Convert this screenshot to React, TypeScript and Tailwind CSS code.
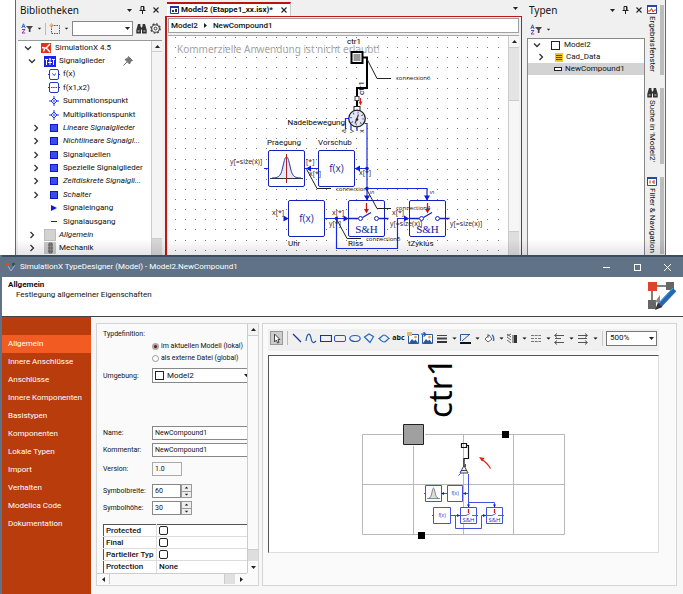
import type { ReactNode } from "react";
import { clsx } from "clsx";

type TreeNode = {
  label: string;
  level: 0 | 1 | 2;
  icon: ReactNode;
  chevron?: "open" | "closed";
  italic?: boolean;
  pinned?: boolean;
};

const indent = { 0: "pl-[2px]", 1: "pl-[6px]", 2: "pl-[10px]" };

function Chevron({ open }: { open: boolean }) {
  return (
    <svg viewBox="0 0 8 8" className="h-2 w-2" fill="none" stroke="#333" strokeWidth="1.3">
      <path d={open ? "M1 2.5 4 5.5 7 2.5" : "M2.5 1 5.5 4 2.5 7"} />
    </svg>
  );
}

function Caret({ className = "" }: { className?: string }) {
  return (
    <svg viewBox="0 0 5 3" className={clsx("h-[3px] w-[5px] shrink-0", className)} fill="#222">
      <path d="M0 0h5L2.5 3z" />
    </svg>
  );
}

function BlueSquare() {
  return <span className="block h-2 w-2 border border-[#0a18c8] bg-[#3c4bf0]" />;
}

function FunctionIcon({ dots }: { dots?: boolean }) {
  return (
    <svg viewBox="0 0 12 11" className="h-[11px] w-3" fill="none" stroke="#2538c8">
      <rect x="1.5" y=".5" width="9" height="10" rx="1.5" />
      <path d={dots ? "M3 5.5h1.5M5.2 5.5h1.5M7.5 5.5h1.5" : "M4.5 4.5 6 6.5M7.5 4.5 6.5 6.5"} />
      <path d="M0 5.5h1.5M10.5 5.5H12" />
    </svg>
  );
}

function DiamondIcon() {
  return (
    <svg viewBox="0 0 12 10" className="h-[10px] w-3" fill="#dfe4ff" stroke="#2538e8">
      <path d="M6 2 9 5 6 8 3 5z" />
      <path d="M1 5h2M9 5h2M6 0v2M6 8v2M5 5h2" />
    </svg>
  );
}

const library: TreeNode[] = [
  {
    label: "SimulationX 4.5",
    level: 0,
    chevron: "open",
    icon: (
      <svg viewBox="0 0 10 10" className="h-[10px] w-[10px]">
        <path d="M0 0h10v10H0z" fill="#e6301a" />
        <path d="M1 4.5 4 5 2.5 8.5M9 1 5.2 5 9 9" fill="none" stroke="#fff" strokeWidth="1.4" />
      </svg>
    ),
  },
  {
    label: "Signalglieder",
    level: 1,
    chevron: "open",
    pinned: true,
    icon: (
      <svg viewBox="0 0 12 11" className="h-[11px] w-3" fill="none" stroke="#fff">
        <path d="M0 0h12v11H0z" fill="#1a20f0" stroke="none" />
        <path d="M1 3.5h3M8 3.5h3M2.5 3.5V9M9.5 3.5V9M4 6.5h4M6 2v7M4.8 3.2h2.4" />
      </svg>
    ),
  },
  { label: "f(x)", level: 2, icon: <FunctionIcon /> },
  { label: "f(x1,x2)", level: 2, icon: <FunctionIcon dots /> },
  { label: "Summationspunkt", level: 2, icon: <DiamondIcon /> },
  { label: "Multiplikationspunkt", level: 2, icon: <DiamondIcon /> },
  { label: "Lineare Signalglieder", level: 2, chevron: "closed", italic: true, icon: <BlueSquare /> },
  { label: "Nichtlineare Signalgl...", level: 2, chevron: "closed", italic: true, icon: <BlueSquare /> },
  { label: "Signalquellen", level: 2, chevron: "closed", icon: <BlueSquare /> },
  { label: "Spezielle Signalglieder", level: 2, chevron: "closed", icon: <BlueSquare /> },
  { label: "Zeitdiskrete Signalgli...", level: 2, chevron: "closed", italic: true, icon: <BlueSquare /> },
  { label: "Schalter", level: 2, chevron: "closed", italic: true, icon: <BlueSquare /> },
  {
    label: "Signaleingang",
    level: 2,
    icon: (
      <svg viewBox="0 0 6 6" className="h-[6px] w-[6px]">
        <path d="M0 0 6 3 0 6z" fill="#0a18e8" />
      </svg>
    ),
  },
  { label: "Signalausgang", level: 2, icon: <span className="block h-px w-[6px] bg-[#0a18e8]" /> },
  {
    label: "Allgemein",
    level: 1,
    chevron: "closed",
    italic: true,
    icon: <span className="block h-3 w-3 border border-[#bdbdbd] bg-[#d2d2d2]" />,
  },
  {
    label: "Mechanik",
    level: 1,
    chevron: "closed",
    icon: (
      <svg viewBox="0 0 12 12" className="h-3 w-3">
        <path d="M0 0h12v12H0z" fill="#c9c9c9" />
        <path d="M5 1h3v10H5zM4 3h5M4 6h5M4 9h5" fill="#999" stroke="#555" strokeWidth=".8" />
      </svg>
    ),
  },
];

const pages = [
  "Allgemein",
  "Innere Anschlüsse",
  "Anschlüsse",
  "Innere Komponenten",
  "Basistypen",
  "Komponenten",
  "Lokale Typen",
  "Import",
  "Verhalten",
  "Modelica Code",
  "Dokumentation",
];

function PinIcon() {
  return (
    <svg viewBox="0 0 7 8" className="h-2 w-[7px]" fill="none" stroke="#222">
      <path d="M2 .5h3v4H2zM.5 4.5h6M3.5 5v3M4.5 1v3" />
    </svg>
  );
}

function CloseIcon() {
  return (
    <svg viewBox="0 0 6 6" className="h-[6px] w-[6px]" stroke="#222" strokeWidth="1.1">
      <path d="M.5.5 5.5 5.5M5.5.5.5 5.5" />
    </svg>
  );
}

function PanelHeader({ title }: { title: string }) {
  return (
    <div className="flex h-5 items-center pr-[3px] pl-[2px]">
      <h2 className="flex-1 font-['Noto_Sans',sans-serif] text-[10px] leading-[14px]">{title}</h2>
      <div className="flex items-center gap-[7px]">
        <button aria-label="Menü"><Caret /></button>
        <button aria-label="Anheften"><PinIcon /></button>
        <button aria-label="Schließen"><CloseIcon /></button>
      </div>
    </div>
  );
}

function SortFilter() {
  return (
    <button aria-label="Sortieren und filtern" className="flex items-center gap-1">
      <svg viewBox="0 0 12 11" className="h-[11px] w-3" fill="none">
        <path d="M.8 5 2.5.8 4.2 5M1.4 3.6h2.2" stroke="#2c5fb8" />
        <path d="M1 6.5h3L1 10h3.2" stroke="#8a3aa8" />
        <path d="M5 3h7L9.5 6v3H7.8V6z" fill="#444" />
      </svg>
      <Caret className="scale-75" />
    </button>
  );
}

function BinocularsIcon() {
  return (
    <svg viewBox="0 0 11 10" className="h-[10px] w-[11px]" fill="#333">
      <path d="M2 0h2.4v2L5 3v6.5H.3V6zM6.6 0H9l1.7 6v3.5H6V3l.6-1z" />
      <path d="M4.5 3.5h2v2h-2z" />
      <path d="M1.6 7h2M7.4 7h2" stroke="#ddd" />
    </svg>
  );
}

function LibraryPanel() {
  return (
    <section className="flex w-[146px] shrink-0 flex-col pl-[2px]">
      <PanelHeader title="Bibliotheken" />
      <div className="flex h-5 items-center justify-between pr-px pb-[3px] pl-[3px]">
        <SortFilter />
        <span className="h-3 w-px bg-[#bbb]" />
        <button aria-label="Neu" className="flex items-center gap-1">
          <svg viewBox="0 0 11 11" className="h-[11px] w-[11px]" fill="none">
            <path d="M2.5 2.5h8v8h-8z" stroke="#555" strokeDasharray="1.5 1" />
            <path d="M2.5 0v5M0 2.5h5M1 1l3 3M4 1 1 4" stroke="#e6a860" strokeWidth=".7" />
          </svg>
          <Caret className="scale-75" />
        </button>
        <div className="relative">
          <select aria-label="Suche" className="block h-[15px] w-[61px] appearance-none border border-[#888] bg-white" />
          <Caret className="pointer-events-none absolute top-[6px] right-[3px]" />
        </div>
        <button aria-label="Suchen"><BinocularsIcon /></button>
        <button aria-label="Optionen">
          <svg viewBox="0 0 12 12" className="h-[11px] w-[11px]" fill="none" stroke="#333">
            <circle cx="6" cy="6" r="4.2" strokeWidth="1.1" />
            <circle cx="6" cy="6" r="1.5" />
            <circle cx="6" cy="6" r="5.2" strokeWidth="1.2" strokeDasharray="2 2.1" />
          </svg>
        </button>
      </div>
      <div className="flex h-[215px] border-t border-[#999] bg-white">
        <ul className="flex min-w-0 flex-1 flex-col">
          {library.map((node) => (
            <li
              key={node.label}
              className={clsx("flex flex-1 items-center whitespace-nowrap", indent[node.level], node.italic && "italic")}
            >
              <span className="mr-1 flex w-4 justify-center">
                {node.chevron && <Chevron open={node.chevron === "open"} />}
              </span>
              <span className="mr-[3px] flex w-3 justify-center">{node.icon}</span>
              {node.label}
              {node.pinned && (
                <svg viewBox="0 0 10 10" className="mr-[18px] ml-auto h-[10px] w-[10px]" fill="#777" stroke="#777">
                  <path d="M5.5.5 9.5 4.5 8 5 6.5 8 2 3.5 5 2z" />
                  <path d="M4 6 .5 9.5" />
                </svg>
              )}
            </li>
          ))}
        </ul>
        <div className="flex w-[11px] flex-col border-l border-[#ccc] bg-[#d8d8d8]">
          <div className="flex h-[11px] items-center justify-center border-b border-[#ccc] bg-[#f4f4f4]">
            <Caret className="rotate-180" />
          </div>
          <div className="mb-4 flex-1 border-b border-[#ccc] bg-[#f4f4f4]" />
        </div>
      </div>
    </section>
  );
}

const dotColumns = Array.from({ length: 33 }, (_, i) => Math.round(175 + i * 10.08));
const dotRows = Array.from({ length: 22 }, (_, i) => Math.round(37 + i * 10.13));

function SwitchBlock({ x }: { x: number }) {
  return (
    <g transform={`translate(${x} 200)`} fill="none" stroke="#1420c0">
      <rect x=".5" y=".5" width="36" height="36" rx="1.5" fill="#fff" fillOpacity=".6" />
      <path d="M0 18.5h10M14.5 17.5 23 12.5M31 18.5h9.5" strokeWidth="1.3" />
      <circle cx="12.5" cy="18.5" r="2" fill="#fff" />
      <circle cx="28.5" cy="18.5" r="2" fill="#fff" />
      <path d="M18.5 3v7" stroke="#c01818" strokeWidth="1.3" />
      <path d="M16 9h5l-2.5 4.5z" fill="#c01818" stroke="none" />
      <text x="18.5" y="33" textAnchor="middle" fill="#1420a0" stroke="none" className="font-['Liberation_Serif',serif] text-[11px]">
        S&amp;H
      </text>
    </g>
  );
}

function ModelDiagram() {
  return (
    <svg className="h-full w-full bg-white" role="img" aria-label="Modell">
      <g transform="translate(-168 -36)">
        <g fill="#777">
          {dotRows.map((y) => dotColumns.map((x) => <rect key={`${x}-${y}`} x={x} y={y} width="1" height="1" />))}
        </g>
        <text x="177" y="53" fill="#a5a5a5" className="font-['Noto_Sans',sans-serif] text-[10px]">
          Kommerzielle Anwendung ist nicht erlaubt!
        </text>

        {/* controller and pointer gauge */}
        <rect x="351.5" y="52" width="11" height="11" fill="#fff" stroke="#000" strokeWidth="2" />
        <rect x="353.5" y="54" width="7" height="7" fill="#999" />
        <path d="M363 57.5h4v30.5h-10v8M357 101v6" fill="none" stroke="#000" strokeWidth="2" />
        <rect x="355" y="96.5" width="4" height="4" fill="#fff" stroke="#444" />
        <path d="M360.5 98v5" stroke="#d82010" />
        <path d="M358.5 101.5h4l-2 4z" fill="#d82010" />
        <rect x="354" y="106.5" width="6" height="4" fill="#fff" stroke="#222" />
        <circle cx="357" cy="118.5" r="8.3" fill="#dfe8fa" stroke="#222" strokeWidth="1.3" />
        <circle cx="357" cy="118.5" r="6" fill="none" stroke="#667" strokeWidth="2" strokeDasharray="1 3.7" />
        <path d="M355 123.5 358.5 114.5" stroke="#a02020" strokeWidth="1.3" />
        <circle cx="357" cy="119.5" r="1.3" fill="#222" />
        <text x="354" y="44" textAnchor="middle">ctr1</text>
        <text transform="translate(364 95) rotate(-90)">ctr1</text>
        <text x="345" y="125" textAnchor="end">Nadelbewegung</text>

        {/* signal wiring */}
        <g fill="none" stroke="#1a28e0" strokeWidth="1.2">
          <path d="M349 118.5h-3.5v11M351 124v6M357 127v4M364.5 123.5h2.5V200M367 188.5h60V200" />
          <path d="M367 168.5h-12M318 168.5h-13M264 168.5h5M284 218.5h5M325 218.5h23" />
          <path d="M336.5 218.5v30h61v-30h11" />
        </g>
        <g fill="#1018e0">
          <path d="M355 168.5l5-3v6zM306 168.5l5-3v6zM288.5 218.5l-5-3v6zM348.5 218.5l-5-3v6zM409 218.5l-5-3v6z" />
          <path d="M367 200.5l-3-5h6zM427 200.5l-3-5h6z" />
          <circle cx="367" cy="168.5" r="1.8" />
          <circle cx="367" cy="188.5" r="1.8" />
          <circle cx="336.5" cy="218.5" r="1.8" />
        </g>

        <g fill="#fff" stroke="#1420b8">
          <rect x="268.5" y="150.5" width="36" height="36" rx="1.5" />
          <rect x="318.5" y="150.5" width="36" height="36" rx="1.5" />
          <rect x="288.5" y="200.5" width="36" height="36" rx="1.5" />
        </g>
        <path d="M270 178.5h33" stroke="#333" />
        <path d="M272 178c8 0 9-3 11-12 1.5-6 2-9 3.5-9s2 3 3.5 9c2 9 3 12 11 12" fill="#e8ebf6" stroke="#2038b0" />
        <path d="M286.5 154v29" stroke="#b02020" />
        <g fill="#1a28a8" className="font-['Open_Sans',sans-serif] text-[10px]" textAnchor="middle">
          <text x="336.5" y="172">f(x)</text>
          <text x="306.5" y="222">f(x)</text>
        </g>
        <SwitchBlock x={348} />
        <SwitchBlock x={409} />

        {/* leader lines */}
        <path
          d="M367 59 377 78.5h14M307 170 317 188.5h14M367 190 377 208.5h14M337 220 347 238.5h14"
          fill="none"
          stroke="#222"
        />
        <g className="font-['Open_Sans',sans-serif] text-[6px]" fill="#111">
          <text x="396" y="80">connection6</text>
          <text x="336" y="191">connection</text>
          <text x="396" y="210">connection4</text>
          <text x="366" y="241">connection5</text>
        </g>

        <g fill="#111">
          <text x="267" y="145">Praegung</text>
          <text x="318" y="145">Vorschub</text>
          <text x="288" y="246">Uhr</text>
          <text x="348" y="246">Riss</text>
          <text x="408" y="246">tZyklus</text>
        </g>
        <g fill="#302018" className="font-['Open_Sans',sans-serif] text-[7px]">
          <text x="230" y="164">y[=size(x)]</text>
          <text x="306" y="164">[*]</text>
          <text x="309" y="176">x[*]</text>
          <text x="359" y="175">x[*]</text>
          <text x="272" y="215">x[*]</text>
          <text x="332" y="215">x[*]</text>
          <text x="329" y="226">y[*]</text>
          <text x="392" y="215">x[*]</text>
          <text x="390" y="226">y[=size(x)]</text>
          <text x="450" y="226">y[=size(x)]</text>
          <text transform="translate(346 133) rotate(-90)">a</text>
          <text transform="translate(354 133) rotate(-90)">v</text>
          <text transform="translate(364 133) rotate(-90)">x</text>
          <text transform="translate(374 194) rotate(-90)">s</text>
          <text transform="translate(434 194) rotate(-90)">s</text>
        </g>
      </g>
    </svg>
  );
}

function ModelWindow() {
  return (
    <main className="flex min-w-0 flex-1 flex-col pl-[3px]">
      <div className="flex h-4 items-start justify-between pt-[2px] pr-1">
        <div className="ml-[2px] flex h-[14px] items-center border-t-2 border-r border-[#c01010] border-r-[#ccc] bg-white px-[3px]">
          <svg viewBox="0 0 9 8" className="mr-[2px] h-2 w-[9px]">
            <path d="M.5.5h8v7h-8z" fill="#fff" stroke="#1838a0" />
            <path d="M0 0h9v2H0z" fill="#1838a0" />
            <path d="M2 4h2v2H2zM5 3h2v3H5z" fill="#333" />
          </svg>
          <span className="font-bold whitespace-nowrap">Model2 (Etappe1_xx.isx)*</span>
          <button aria-label="Tab schließen" className="ml-2"><CloseIcon /></button>
        </div>
        <button aria-label="Fensterliste" className="mt-[5px]"><Caret /></button>
      </div>
      <div className="flex flex-1 flex-col border-t border-r border-l-2 border-[#c01818] bg-[#f0f0f0] pl-px">
        <nav className="mt-px mr-[2px] flex h-[15px] items-center gap-[5px] border border-[#a0a0a0] bg-white px-[2px] font-medium">
          <a href="#model2">Model2</a>
          <Caret className="-rotate-90" />
          <a href="#newcompound1">NewCompound1</a>
        </nav>
        <div className="mt-[2px] mr-[2px] flex flex-1 border-t border-[#aaa]">
          <div className="h-[219px] min-w-0 flex-1"><ModelDiagram /></div>
          <div className="flex w-[11px] flex-col border-l border-[#ccc] bg-[#f6f6f6]">
            <div className="flex h-[11px] items-center justify-center"><Caret className="rotate-180" /></div>
            <div className="h-[54px] border-y border-[#ccc] bg-[#e4e4e4]" />
            <div className="flex-1" />
            <div className="h-6 border-t border-[#ccc] bg-[#dedede]" />
          </div>
        </div>
      </div>
    </main>
  );
}

function TypesPanel() {
  return (
    <section className="ml-[5px] flex w-[118px] shrink-0 flex-col">
      <PanelHeader title="Typen" />
      <div className="flex h-[18px] items-center pl-[3px]"><SortFilter /></div>
      <ul className="flex-1 border border-b-0 border-[#888] bg-white">
        <li className="flex h-3 items-center pl-[5px]">
          <Chevron open />
          <span className="mr-1 ml-[10px] h-[9px] w-[9px] border border-[#222]" />
          Model2
        </li>
        <li className="flex h-3 items-center pl-[9px]">
          <Chevron open={false} />
          <svg viewBox="0 0 8 9" className="mr-[3px] ml-[10px] h-[9px] w-2">
            <path d="M0 0h8v9H0z" fill="#f2c428" />
            <path d="M1 2.5h6M1 4.5h6M1 6.5h6" stroke="#334a90" strokeWidth="1.2" />
          </svg>
          Cad_Data
        </li>
        <li className="flex h-3 items-center bg-[#d3d3d3] pl-[26px]">
          <span className="mr-[3px] h-1 w-2 border border-[#222] bg-white" />
          NewCompound1
        </li>
      </ul>
    </section>
  );
}

function SideTab({ label, icon, className }: { label: string; icon: ReactNode; className: string }) {
  return (
    <button className={clsx("flex w-[19px] flex-col items-center gap-[2px] overflow-hidden border-r-4 border-[#bcbcbc] pr-px", className)}>
      <span className="shrink-0">{icon}</span>
      <span className="leading-3 whitespace-nowrap [writing-mode:vertical-rl]">{label}</span>
    </button>
  );
}

function ChartIcon({ d }: { d: string }) {
  return (
    <svg viewBox="0 0 10 9" className="h-[9px] w-[10px]" fill="none">
      <path d="M.5.5h9v8h-9z" fill="#fff" stroke="#2848a0" />
      <path d="M0 0h10v2H0z" fill="#2848a0" />
      <path d={d} stroke="#c83020" />
    </svg>
  );
}

function SideTabs() {
  return (
    <aside className="flex w-[20px] shrink-0 flex-col gap-[13px] overflow-hidden pt-[5px]">
      <SideTab label="Ergebnisfenster" className="h-[70px]" icon={<ChartIcon d="M1 6h2l1.5-2.5L6 7l1.5-2H9" />} />
      <SideTab label="Suche in 'Model2'" className="h-[76px]" icon={<BinocularsIcon />} />
      <SideTab label="Filter & Navigation" className="h-[77px]" icon={<ChartIcon d="M3 3.5v3M5 5h2M7 3v4" />} />
    </aside>
  );
}

const tools: { name: string; icon: ReactNode; menu?: boolean }[] = [
  { name: "Linie", icon: <path d="M2 2 10 10" stroke="#1a3890" strokeWidth="1.2" /> },
  { name: "Kurve", icon: <path d="M1 9c1-8 4-9 5-3s3 5 5 3" stroke="#2058b0" strokeWidth="1.2" /> },
  { name: "Rechteck", icon: <path d="M.5 3.5h11v6H.5z" stroke="#183498" strokeWidth="1.2" /> },
  { name: "Abgerundetes Rechteck", icon: <rect x=".5" y="3.5" width="11" height="6" rx="1.5" stroke="#2858b0" /> },
  { name: "Ellipse", icon: <ellipse cx="6" cy="6.5" rx="5.2" ry="3" stroke="#2858b0" strokeWidth="1.2" /> },
  { name: "Polygon", icon: <path d="M1.5 5 6 2l4.5 2.5-3.5 6z" stroke="#2868c0" strokeWidth="1.2" /> },
  { name: "Geschlossene Kurve", icon: <path d="M6 3c2 0 3 2 5 3.5-2 1-3 3.5-5 3.5S3 8 1 6.5C3 6 4 3 6 3z" stroke="#2868c0" strokeWidth="1.2" /> },
  { name: "Text", icon: null },
  {
    name: "Bild",
    icon: (
      <>
        <path d="M1.5 2.5h10v9h-10z" fill="#fff" stroke="#2858a0" />
        <path d="M2 11 5 7l2 2 1.5-1.5L11 11z" fill="#2858a0" />
        <path d="M0 0h5v4H0z" fill="#e8b870" />
        <circle cx="8.5" cy="5" r="1.3" fill="#e8a030" />
      </>
    ),
  },
  {
    name: "Bild verknüpfen",
    icon: (
      <>
        <path d="M1.5 2.5h10v9h-10z" fill="#fff" stroke="#2858a0" />
        <path d="M2 11 5 7l2 2 1.5-1.5L11 11z" fill="#2858a0" />
        <path d="M0 2h4M2.5 0 5 2.5 2.5 4.5" stroke="#2060c0" strokeWidth="1.2" />
        <circle cx="8.5" cy="5" r="1.3" fill="#e8a030" />
      </>
    ),
  },
  {
    name: "Linienstärke",
    menu: true,
    icon: (
      <>
        <path d="M1 3.5h10" stroke="#444" />
        <path d="M1 6.5h10" stroke="#444" strokeWidth="2" />
        <path d="M1 10h10" stroke="#333" strokeWidth="2" />
      </>
    ),
  },
  {
    name: "Linienfarbe",
    menu: true,
    icon: (
      <>
        <path d="M1 11h11" stroke="#111" strokeWidth="2" />
        <path d="M1.5 9V2.5H11M3 9l8-7" stroke="#2858a0" />
      </>
    ),
  },
  {
    name: "Füllfarbe",
    menu: true,
    icon: (
      <>
        <path d="M2 7 6 3l3 4-4 3-3-3zM5 2v4" fill="#fff" stroke="#666" />
        <path d="M9 3c2 1 2 3 1.5 6" stroke="#2878c8" strokeWidth="1.5" />
      </>
    ),
  },
  {
    name: "Füllmuster",
    menu: true,
    icon: (
      <>
        <path d="M1 2 5 5M1 5l4 3M1 8l4 3M5 2 1 4" stroke="#666" />
        <path d="M6 3h2v8H6z" fill="#999" />
        <path d="M8 3h3v8H8z" fill="#333" />
      </>
    ),
  },
  { name: "Linienart", menu: true, icon: <path d="M1 3.5h10M1 6.5h3M5 6.5h2M8 6.5h3M1 9.5h10" stroke="#777" strokeDasharray="3 .7" /> },
  { name: "Linienanfang", menu: true, icon: <path d="M2 3.5h9M2 6.5h6M2 10.5h9M4 1.5l-2.5 2L4 5.5M4 8.5l-2.5 2 2.5 2" stroke="#555" /> },
  { name: "Linienende", menu: true, icon: <path d="M1 3.5h9M1 6.5h9M1 10.5h9M8 1.5l2.5 2L8 5.5M8 8.5l2.5 2-2.5 2" stroke="#555" /> },
];

function DrawToolbar() {
  return (
    <div className="flex h-[22px] items-center bg-[#f0f0f0] px-[2px] pb-1">
      <button aria-label="Auswählen" className="flex h-[14px] w-[13px] items-center justify-center border border-[#999] bg-[#ccc]">
        <svg viewBox="0 0 8 11" className="h-[11px] w-2" fill="#fff" stroke="#444">
          <path d="M1.5 1v8l2-2 1 3 1.5-.5-1-3h2z" />
        </svg>
      </button>
      <span className="mr-[2px] ml-1 h-[14px] w-px bg-[#bbb]" />
      <div className="flex flex-1 items-center justify-between pr-[4px] pl-px">
        {tools.map((tool) => (
          <button key={tool.name} aria-label={tool.name} className="flex items-center gap-1">
            {tool.icon ? (
              <svg viewBox="0 0 12 13" className="h-[13px] w-3" fill="none">{tool.icon}</svg>
            ) : (
              <span className="font-['Open_Sans',sans-serif] text-[7px] leading-3 font-bold">abc</span>
            )}
            {tool.menu && <Caret className="scale-90" />}
          </button>
        ))}
      </div>
      <div className="relative border-l border-[#ccc] pl-[3px]">
        <select aria-label="Zoom" className="block h-[15px] w-[51px] appearance-none border border-[#777] bg-white pl-[3px] leading-3">
          <option>500%</option>
        </select>
        <Caret className="pointer-events-none absolute top-[6px] right-[3px]" />
      </div>
    </div>
  );
}

function SymbolDrawing() {
  return (
    <svg className="block h-full w-full font-['Open_Sans',sans-serif]" role="img" aria-label="Symbol">
      <g transform="translate(-269 -356)" fill="none">
        <path d="M362.5 434.5h202v100h-202zM362.5 484.5h202M413.5 434.5v100M463.5 434.5v100M513.5 434.5v100" stroke="#b8b8b8" />
        <text transform="translate(452 418) rotate(-90)" fill="#000" className="font-['Noto_Sans',sans-serif] text-[33px]">ctr1</text>
        <path d="M402 423h23v23h-23z" fill="#fff" />
        <path d="M403.5 424.5h20v20h-20z" fill="#a0a0a0" stroke="#222" />
        <path d="M502 431h7v7h-7zM418 532h7v7h-7z" fill="#000" />
        <path d="M490.5 468.5c-3-5-5-7-9-9" stroke="#e02010" strokeWidth="1.3" />
        <path d="M479 457l5.5 1-2.5 3.5z" fill="#e02010" />

        <path d="M461.5 443.5h5v4h-5zM466.5 445.5h2v13h-4.5v8" stroke="#111" strokeWidth="1.2" />
        <path d="M464 465.5l-4 7.5h8zM461 470.5h6" fill="#eee" stroke="#333" strokeWidth=".9" />
        <path d="M465.5 464v3" stroke="#d02010" />
        <g stroke="#4450e0">
          <path d="M460.5 471v2.5l-2 2M468.5 474v33.5M468.5 502.5h26v5M468.5 493.5h-6M447 493.5h-6M424 493.5h2M432 515.5h2M450 515.5h10M455.5 515.5v13h26v-13h5M476 515.5h2M502 515.5h2" />
          <path d="M425.5 485.5h16v16h-16zM447.5 485.5h15v16h-15zM433.5 507.5h17v16h-17zM460.5 507.5h16v16h-16zM486.5 507.5h16v16h-16z" fill="#fff" />
          <path d="M461 515.5h5l4-2M472 515.5h4M487 515.5h5l4-2M498 515.5h4" strokeWidth=".9" />
        </g>
        <path d="M427 498.5h13M429 498c3 0 3-10 4.5-10s1.5 10 4.5 10" fill="#ddd" stroke="#667" strokeWidth=".8" />
        <path d="M468.5 509v4M494.5 509v4" stroke="#d02010" strokeWidth="1.3" />
        <g fill="#2030c8" textAnchor="middle" className="text-[5px]">
          <text x="455" y="495">f(x)</text>
          <text x="442" y="517">f(x)</text>
          <text x="468.5" y="522" className="text-[6px]">S&amp;H</text>
          <text x="494.5" y="522" className="text-[6px]">S&amp;H</text>
        </g>
        <path
          d="M466 492v3l-3-1.5zM444 492v3l-3-1.5zM457 514v3l3-1.5zM483 514v3l3-1.5zM467 504.5h3l-1.5 3zM493 504.5h3l-1.5 3z"
          fill="#1018e0"
        />
      </g>
    </svg>
  );
}

const flags = ["Protected", "Final", "Partieller Typ"];
const labelClass = "w-[49px] shrink-0 whitespace-nowrap";
const inputClass = "border border-[#888] bg-white px-[2px] leading-3";

function Spinner({ id, label, value }: { id: string; label: string; value: string }) {
  return (
    <div className="flex h-[14px] items-center">
      <label htmlFor={id} className={labelClass}>{label}</label>
      <input id={id} defaultValue={value} className={clsx(inputClass, "h-[14px] w-[29px]")} />
      <div className="flex h-[14px] w-[11px] flex-col border border-[#999]">
        <button type="button" aria-label={`${label} erhöhen`} className="flex flex-1 items-center justify-center border-b border-[#999] bg-[#eee]">
          <Caret className="rotate-180 scale-75" />
        </button>
        <button type="button" aria-label={`${label} verringern`} className="flex flex-1 items-center justify-center bg-[#eee]">
          <Caret className="scale-75" />
        </button>
      </div>
    </div>
  );
}

function GeneralForm() {
  return (
    <form className="w-[163px] shrink-0 border border-[#d4d4d4] bg-[#fafafa] text-[7px] leading-3">
      <div className="flex h-[249px]">
        <div className="flex min-w-0 flex-1 flex-col overflow-hidden pt-1 pl-[6px]">
          <fieldset>
            <legend>Typdefinition:</legend>
            <label className="ml-[49px] flex h-3 items-center gap-[2px] whitespace-nowrap">
              <input
                type="radio"
                name="scope"
                defaultChecked
                className="h-[7px] w-[7px] shrink-0 appearance-none rounded-full border border-[#888] bg-white checked:border-2 checked:border-[#aaa] checked:bg-[#701010]"
              />
              im aktuellen Modell (lokal)
            </label>
            <label className="ml-[49px] flex h-3 items-center gap-[2px] whitespace-nowrap">
              <input type="radio" name="scope" className="h-[7px] w-[7px] shrink-0 appearance-none rounded-full border border-[#999] bg-white" />
              als externe Datei (global)
            </label>
          </fieldset>
          <div className="mt-1 flex h-[15px] items-center">
            <label htmlFor="environment" className={labelClass}>Umgebung:</label>
            <div className="relative flex-1">
              <select id="environment" className="block h-[15px] w-full appearance-none border border-r-0 border-[#888] bg-white pl-[14px] text-[8px] leading-3">
                <option>Model2</option>
              </select>
              <span className="pointer-events-none absolute top-[3px] left-[3px] h-[9px] w-[9px] border border-[#222]" />
              <Caret className="pointer-events-none absolute top-[6px] -right-[2px]" />
            </div>
          </div>
          <div className="mt-[43px] flex h-[14px] items-center">
            <label htmlFor="name" className={labelClass}>Name:</label>
            <input id="name" defaultValue="NewCompound1" className={clsx(inputClass, "h-[14px] min-w-0 flex-1 border-r-0")} />
          </div>
          <div className="mt-[3px] flex h-[14px] items-center">
            <label htmlFor="comment" className={labelClass}>Kommentar:</label>
            <input id="comment" defaultValue="NewCompound1" className={clsx(inputClass, "h-[14px] min-w-0 flex-1 border-r-0")} />
          </div>
          <div className="mt-[5px] mb-2 flex h-[14px] items-center">
            <label htmlFor="version" className={labelClass}>Version:</label>
            <input id="version" defaultValue="1.0" className="h-[14px] w-[30px] border border-[#aaa] bg-[#fafafa] px-[2px] leading-3" />
          </div>
          <div className="mb-[9px] flex flex-col gap-[3px]">
            <Spinner id="symbol-width" label="Symbolbreite:" value="60" />
            <Spinner id="symbol-height" label="Symbolhöhe:" value="30" />
          </div>
          <table className="w-full border-t border-l border-[#555] bg-white text-[8px] leading-[11px] font-medium">
            <tbody>
              {flags.map((flag) => (
                <tr key={flag} className="h-3 border-b border-[#ddd]">
                  <th scope="row" className="w-[53px] border-r border-[#ddd] p-0 pl-[2px] text-left font-medium whitespace-nowrap">
                    <label htmlFor={flag}>{flag}</label>
                  </th>
                  <td className="p-0 pl-[2px]">
                    <input id={flag} type="checkbox" className="block h-[9px] w-[9px] appearance-none rounded-[2px] border border-[#222] bg-white" />
                  </td>
                </tr>
              ))}
              <tr className="h-3">
                <th scope="row" className="border-r border-[#ddd] p-0 pl-[2px] text-left font-medium">Protection</th>
                <td className="p-0 pl-[2px]">None</td>
              </tr>
            </tbody>
          </table>
        </div>
        <div className="flex w-[11px] flex-col border-l border-[#ccc]">
          <div className="flex h-3 items-center justify-center border-b border-[#ccc] bg-[#f4f4f4]"><Caret className="rotate-180" /></div>
          <div className="flex-1" />
          <div className="h-3 border-t border-[#ccc] bg-[#dedede]" />
          <div className="flex h-3 items-center justify-center"><Caret /></div>
        </div>
      </div>
      <div className="mr-[11px] flex h-[11px] items-center border-t border-[#ccc]">
        <span className="flex w-3 justify-center"><Caret className="rotate-90" /></span>
        <span className="h-full flex-1 border-x border-[#ccc] bg-[#f8f8f8]" />
        <span className="h-full w-[10px] bg-[#e0e0e0]" />
        <span className="flex w-3 justify-center"><Caret className="-rotate-90" /></span>
      </div>
    </form>
  );
}

function TypeDesigner() {
  return (
    <section className="flex flex-1 flex-col border-l-2 border-[#607286] bg-[#f7f7f7]">
      <header className="flex h-[22px] items-center border-t-2 border-[#384c66] bg-[#607286] text-white">
        <svg viewBox="0 0 9 9" className="mx-[4px] h-[9px] w-[9px]" fill="none">
          <path d="M0 0h3v3H0z" fill="#e04828" />
          <path d="M6 0h3v3H6z" fill="#384c66" />
          <path d="M2 3 5 8l4-6" stroke="#90b8e8" />
        </svg>
        <h1 className="flex-1 pl-px leading-3">SimulationX TypeDesigner (Model) - Model2.NewCompound1</h1>
        <div className="flex w-[92px] items-center justify-between pr-3 pl-3">
          <button aria-label="Minimieren" className="h-2 w-[7px]"><span className="block h-px bg-white" /></button>
          <button aria-label="Maximieren" className="h-[7px] w-[7px] border border-white" />
          <button aria-label="Schließen">
            <svg viewBox="0 0 7 7" className="h-[7px] w-[7px]" stroke="#fff"><path d="M0 0 7 7M7 0 0 7" /></svg>
          </button>
        </div>
      </header>
      <div className="flex h-10 justify-between border-b border-[#444] bg-white pt-[3px] pr-[6px] pl-[6px] leading-[10px]">
        <div>
          <h2 className="font-bold">Allgemein</h2>
          <p className="pl-2">Festlegung allgemeiner Eigenschaften</p>
        </div>
        <svg viewBox="0 0 30 32" className="h-8 w-[30px]" fill="none">
          <path d="M10 6h10M5 11v9" stroke="#555" strokeWidth="1.5" />
          <path d="M1 2h9v9H1z" fill="#d84828" />
          <path d="M19 2h8v8h-8zM1 20h8v9H1z" fill="#666" />
          <path d="M8 22 13 15v8z" fill="#888" />
          <path d="M27.5 9.5 13 25" stroke="#2868b0" strokeWidth="5" />
          <path d="M26 8 11.5 23.5" stroke="#58a0e0" />
          <path d="M11 22.5 15.5 27 8 30z" fill="#333" />
        </svg>
      </div>
      <div className="flex flex-1">
        <nav className="flex w-[89px] shrink-0 flex-col bg-[#b83c0c] pt-[18px] text-white">
          {pages.map((page, i) => (
            <a
              key={page}
              href={`#${page}`}
              className={clsx("flex h-[18px] items-center pl-[6px] leading-3 whitespace-nowrap", i === 0 && "bg-[#f25c22]")}
            >
              {page}
            </a>
          ))}
        </nav>
        <div className="flex min-w-0 flex-1 gap-[3px] pt-[6px] pr-[6px] pb-2 pl-[5px]">
          <GeneralForm />
          <div className="flex min-w-0 flex-1 flex-col border border-[#d4d4d4] bg-[#fafafa] py-[5px] pr-[17px] pl-[5px]">
            <DrawToolbar />
            <div className="mt-1 h-[198px] border border-t-[#555] border-r-[#ddd] border-b-[#ddd] border-l-[#555] bg-white">
              <SymbolDrawing />
            </div>
          </div>
        </div>
      </div>
    </section>
  );
}

export default function App() {
  return (
    <div className="flex min-h-screen flex-col bg-white font-['Roboto',sans-serif] text-[8px] leading-[10px] text-[#111]">
      <div className="relative mr-[17px] ml-[15px] flex border-x border-[#666] bg-[#f0f0f0]">
        <LibraryPanel />
        <ModelWindow />
        <TypesPanel />
        <SideTabs />
        <div className="pointer-events-none absolute inset-x-0 bottom-0 h-4 bg-linear-to-b from-transparent to-black/10" />
      </div>
      <TypeDesigner />
    </div>
  );
}
